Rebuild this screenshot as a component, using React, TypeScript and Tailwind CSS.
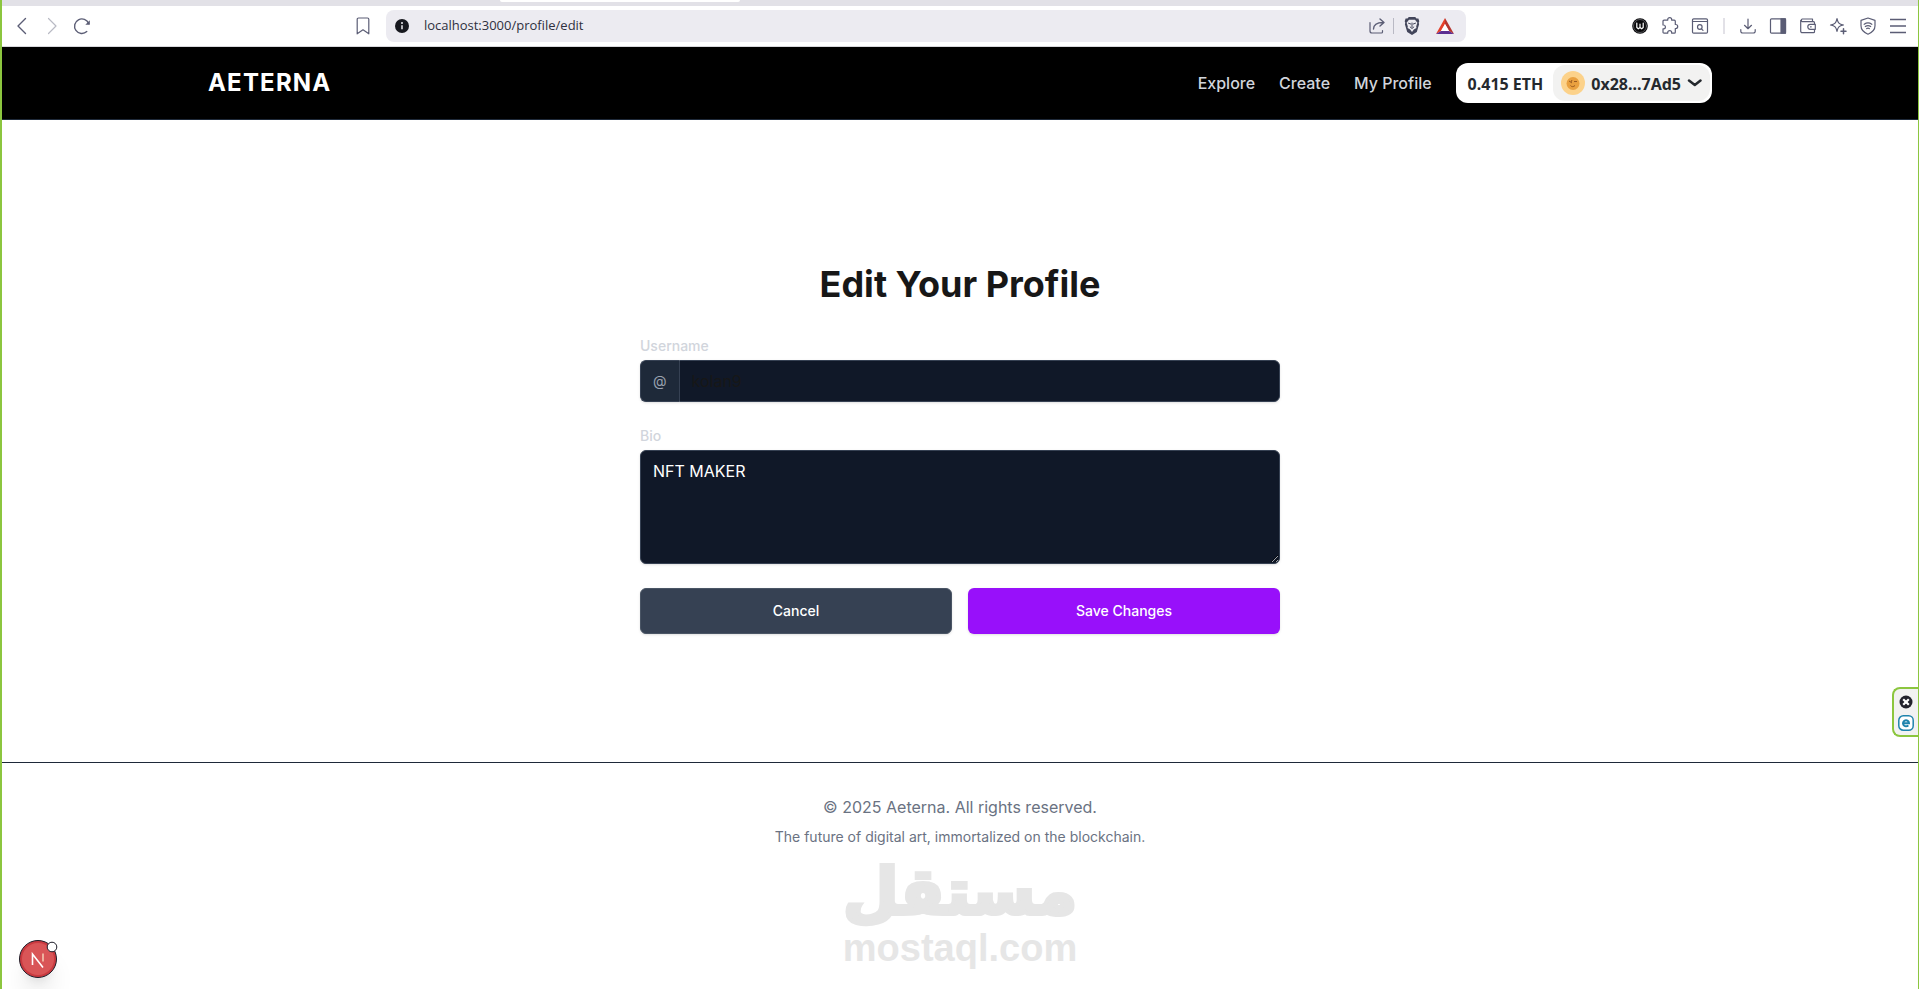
import { useState } from "react";
import type { ReactNode } from "react";

interface IconProps {
  children: ReactNode;
  className?: string;
}

function Icon({ children, className = "" }: IconProps) {
  return (
    <svg
      viewBox="0 0 16 16"
      fill="none"
      stroke="currentColor"
      strokeWidth="1.2"
      strokeLinecap="round"
      strokeLinejoin="round"
      className={`w-4 h-4 shrink-0 overflow-visible ${className}`}
      aria-hidden="true"
    >
      {children}
    </svg>
  );
}

function ToolButton({ label, children }: { label: string; children: ReactNode }) {
  return (
    <button type="button" aria-label={label} className="flex text-[#5b5d75]">
      {children}
    </button>
  );
}

function BrowserBar() {
  return (
    <div>
      {/* Tab strip */}
      <div className="h-[6px] bg-[#e2e1e7] flex">
        <div className="ml-[26%] w-60 h-[2px] bg-white rounded-b-md" />
      </div>

      {/* Toolbar */}
      <div className="h-[41px] bg-white border-b border-[#d8d8dc] flex items-center pl-3 pr-3">
        <div className="flex items-center gap-[14px]">
          <ToolButton label="Back">
            <Icon>
              <path d="M11.500 .5 4 8l7.500 7.500" strokeWidth="1.400" />
            </Icon>
          </ToolButton>
          <ToolButton label="Forward">
            <Icon className="text-[#b9bac4]">
              <path d="M4.500 .5 12 8l-7.500 7.500" />
            </Icon>
          </ToolButton>
          <ToolButton label="Reload">
            <Icon>
              <path d="M12.800 13.600A7.300 7.300 0 1 1 14.700 5.600" strokeWidth="1.400" />
              <path d="M15.800 2.300v4.500h-4.500z" fill="currentColor" stroke="none" />
            </Icon>
          </ToolButton>
        </div>

        <div className="ml-[14%] flex items-center gap-[15px]">
          <ToolButton label="Bookmark">
            <Icon>
              <path d="M2.200 1.300A1.300 1.300 0 0 1 3.500 0h9a1.300 1.300 0 0 1 1.300 1.300v14.500L8 11.800l-5.800 4z" />
            </Icon>
          </ToolButton>
          <div className="w-[1080px] h-8 rounded-lg bg-[#ecebf1] flex items-center pl-2 pr-3">
            <svg viewBox="0 0 16 16" className="w-4 h-4" aria-hidden="true">
              <circle cx="8" cy="8" r="7" fill="#17181f" />
              <circle cx="8" cy="5" r="1" fill="#ecebf1" />
              <path d="M8 7.200v4" stroke="#ecebf1" strokeWidth="1.500" fill="none" />
            </svg>
            <input
              type="text"
              aria-label="Address"
              defaultValue="localhost:3000/profile/edit"
              className="flex-1 min-w-0 ml-[14px] bg-transparent outline-none text-[13px] text-[#2f3040] font-['Open_Sans',sans-serif]"
            />
            <ToolButton label="Share">
              <Icon>
                <path d="M1 4.500V13a2 2 0 0 0 2 2h9.500a1 1 0 0 0 1-1v-1.500" />
                <path d="M4.500 11c0-4 3-6.500 9.500-6.500M11 1l4 3.500L11 8" strokeWidth="1.400" />
              </Icon>
            </ToolButton>
            <div className="w-px h-4 bg-[#b9b9c4] mx-2" />
            <ToolButton label="Brave Shields">
              <Icon className="ml-[2px]">
                <path
                  d="M4.800-.9h6.400l1.300 1.300 1.900.2.900 2.600-.6 1.500.4 1.500-2.300 7.800L8 17l-4.800-3L.9 6.200l.4-1.500L.7 3.200l.9-2.600 1.900-.2z"
                  fill="#42455a"
                  stroke="none"
                />
                <path
                  d="M5 1.800h6l2.400 3-1.200 3.500.2 1.800-2.600 1.400L8 14l-1.800-2.500-2.600-1.400.2-1.800L2.600 4.800z"
                  fill="#ecebf1"
                  stroke="none"
                />
                <path d="M4.500 5.200l2.200.8M11.500 5.200 9.300 6M8 5v4M6.200 9 8 10.500 9.800 9" stroke="#42455a" strokeWidth="1" />
              </Icon>
            </ToolButton>
            <button type="button" aria-label="Brave Rewards" className="ml-4">
              <svg viewBox="0 0 18 16" className="w-[18px] h-4" aria-hidden="true">
                <path d="M9 0 0 16l5-3 4-7z" fill="#e5402a" />
                <path d="M9 0l9 16-5-3-4-7z" fill="#b5352f" />
                <path d="M0 16h18l-5-3H5z" fill="#5b2d91" />
                <path d="M9 6l4 7H5z" fill="#fff" />
              </svg>
            </button>
          </div>
        </div>

        <div className="ml-auto flex items-center gap-[14px]">
          <ToolButton label="Wallet extension">
            <Icon>
              <circle cx="8" cy="8" r="7.800" fill="#08080a" stroke="none" />
              <circle cx="8" cy="8" r="6.500" stroke="#8a8a90" strokeWidth=".6" />
              <path d="M4.800 5v4.500l1.500 1.300L8 9.500l1.700 1.300 1.500-1.300V5M8 6v3.500" stroke="#fff" strokeWidth="1.200" />
            </Icon>
          </ToolButton>
          <ToolButton label="Extensions">
            <Icon>
              <path d="M3 2.200h2.700V1.700a2 2 0 0 1 4 0v.5h2.600a1 1 0 0 1 1 1v3.300h.4a2 2 0 0 1 0 4h-.4v3.700a1 1 0 0 1-1 1h-2.600v-.5a2 2 0 0 0-4 0v.5H2a1 1 0 0 1-1-1v-3.400h.5a1.900 1.900 0 0 0 0-3.800H1V3.200a1 1 0 0 1 1-1z" />
            </Icon>
          </ToolButton>
          <ToolButton label="Find in page">
            <Icon>
              <rect x=".5" y=".8" width="15" height="14.400" rx="1.200" />
              <path d="M.5 3.500h15" />
              <circle cx="7.800" cy="9" r="2.300" />
              <path d="m9.500 10.800 1.500 1.500" />
            </Icon>
          </ToolButton>
          <div className="w-[2px] h-4 bg-[#e2e1e7] mx-px" />
          <ToolButton label="Downloads">
            <Icon>
              <path d="M8 1v9.500M4.500 7.300 8 10.700l3.500-3.400M.8 11.500v1.700A1.800 1.800 0 0 0 2.600 15h10.800a1.800 1.800 0 0 0 1.800-1.800v-1.700" />
            </Icon>
          </ToolButton>
          <ToolButton label="Sidebar">
            <Icon>
              <rect x=".5" y=".8" width="15" height="14.400" rx="1" />
              <path d="M11 .8h4.500v14.400H11z" fill="currentColor" />
            </Icon>
          </ToolButton>
          <ToolButton label="Wallet">
            <Icon>
              <path d="M14.500 6V4.700a1 1 0 0 0-1-1H2.200A1.500 1.500 0 0 1 2.200 1h10.300v2.700M.7 2.300v10.900A1.500 1.500 0 0 0 2.200 14.700h11.300a1 1 0 0 0 1-1v-2" />
              <path d="M10.300 6.300h5v5h-5a2.500 2.500 0 0 1 0-5zM10.500 8.800h.7" />
            </Icon>
          </ToolButton>
          <ToolButton label="Leo AI">
            <Icon>
              <path d="M7 .5c.9 4.500 2 5.700 6.500 6.500C9 7.900 7.900 9 7 13.500 6.100 9 5 7.900.5 7 5 6.200 6.100 5 7 .5z" />
              <path d="M13.500 10.800v5M11 13.300h5" strokeWidth="1.500" />
            </Icon>
          </ToolButton>
          <ToolButton label="VPN">
            <Icon>
              <path d="M8 0 15 2.400v5.400c0 4.200-3.200 6.900-7 8.400-3.800-1.500-7-4.200-7-8.400V2.400z" />
              <path d="M4.200 6.300c2.400-1.700 5.200-1.700 7.600 0M5.300 8.500c1.700-1.200 3.700-1.200 5.400 0M6.700 10.600c.8-.5 1.800-.5 2.600 0" />
            </Icon>
          </ToolButton>
          <ToolButton label="Menu">
            <Icon>
              <path d="M0 1.500h16M0 8h16M0 14.500h16" strokeLinecap="butt" strokeWidth="1.400" />
            </Icon>
          </ToolButton>
        </div>
      </div>
    </div>
  );
}

function WalletButton() {
  return (
    <button
      type="button"
      className="h-10 bg-white rounded-xl flex items-center p-[2px] text-[#25292e] font-bold text-base font-['Noto_Sans',sans-serif]"
    >
      <span className="px-[10px] pt-px">0.415 ETH</span>
      <span className="h-9 rounded-xl bg-[#f2f2f1] flex items-center px-2 gap-[6px]">
        <svg viewBox="0 0 24 24" className="w-6 h-6" aria-hidden="true">
          <circle cx="12" cy="12" r="12" fill="#fcd28a" />
          <circle cx="12" cy="12.500" r="6.500" fill="#e9a03f" />
          <path d="M8 10l3 2M11 9l-1 2M16 10.500h-3M9.500 14.500c1 1.500 3 1.500 4.500 0" stroke="#9a5a20" strokeWidth="1" fill="none" />
        </svg>
        <span className="pt-px">0x28...7Ad5</span>
        <svg viewBox="0 0 15 8" fill="none" className="w-[15px] h-2" aria-hidden="true">
          <path d="M2 1.500 7.800 6l5.700-4.500" stroke="#25292e" strokeWidth="2.500" strokeLinecap="round" strokeLinejoin="round" />
        </svg>
      </span>
    </button>
  );
}

function Header() {
  return (
    <header className="bg-black border-b border-gray-800">
      <div className="max-w-[1536px] mx-auto h-[72px] px-4 flex items-center justify-between">
        <a href="#" className="text-2xl font-bold tracking-wider text-white">
          AETERNA
        </a>
        <nav className="flex items-center gap-6 font-medium text-gray-300">
          <a href="#">Explore</a>
          <a href="#">Create</a>
          <a href="#">My Profile</a>
          <WalletButton />
        </nav>
      </div>
    </header>
  );
}

function EditProfileForm() {
  const [username, setUsername] = useState("kolan9");
  const [bio, setBio] = useState("NFT MAKER");

  return (
    <main className="w-full max-w-[672px] mx-auto px-4 pt-36 pb-32">
      <h1 className="text-4xl font-bold text-center mb-8">Edit Your Profile</h1>
      <form className="space-y-6" onSubmit={(e) => e.preventDefault()}>
        <div>
          <label htmlFor="username" className="block text-sm font-medium text-gray-300">
            Username
          </label>
          <div className="mt-1 flex rounded-md shadow-sm">
            <span className="inline-flex items-center px-3 rounded-l-md border border-r-0 border-gray-700 bg-gray-800 text-gray-400 text-sm">
              @
            </span>
            <input
              id="username"
              type="text"
              value={username}
              onChange={(e) => setUsername(e.target.value)}
              className="flex-1 min-w-0 px-3 py-2 rounded-r-md border border-gray-700 bg-gray-900 text-[#171717]"
            />
          </div>
        </div>

        <div>
          <label htmlFor="bio" className="block text-sm font-medium text-gray-300">
            Bio
          </label>
          <textarea
            id="bio"
            rows={4}
            value={bio}
            onChange={(e) => setBio(e.target.value)}
            className="mt-1 block w-full px-3 py-2 rounded-md border border-gray-700 bg-gray-900 text-white shadow-sm"
          />
        </div>

        <div className="flex gap-4">
          <button
            type="button"
            className="flex-1 py-3 px-4 border border-gray-600 rounded-md shadow-sm text-sm font-medium text-white bg-gray-700"
          >
            Cancel
          </button>
          <button
            type="submit"
            className="flex-1 py-3 px-4 border border-transparent rounded-md shadow-sm text-sm font-medium text-white bg-purple-600"
          >
            Save Changes
          </button>
        </div>
      </form>
    </main>
  );
}

function Footer() {
  return (
    <footer className="border-t border-gray-800 pt-8 text-center text-gray-500">
      <p>&copy; 2025 Aeterna. All rights reserved.</p>
      <p className="text-sm mt-2">The future of digital art, immortalized on the blockchain.</p>
      <div className="flex flex-col items-center pt-2 text-[#e6e6e6] font-bold">
        <span
          lang="ar"
          dir="rtl"
          className="text-[64px] leading-[74px] font-['DejaVu_Sans',sans-serif] [-webkit-text-stroke:4px_#e6e6e6] [stroke-linejoin:round]"
        >
          مستقل
        </span>
        <span className="text-[38px] leading-[38px] font-['Liberation_Sans',sans-serif]">mostaql.com</span>
      </div>
    </footer>
  );
}

export default function App() {
  return (
    <div className="relative min-h-screen overflow-hidden bg-white text-[#171717] border-l-2 border-r border-[#8cc63f] font-['Inter',sans-serif]">
      <BrowserBar />
      <Header />
      <EditProfileForm />
      <Footer />

      {/* Side widget */}
      <div className="absolute right-0 top-[687px] w-[26px] h-[50px] bg-[#f2f2f2] border-2 border-r-0 border-[#8cc63f] rounded-l-lg flex flex-col items-center justify-center gap-[5px]">
        <button type="button" aria-label="Close">
          <svg viewBox="0 0 16 16" className="w-4 h-4 block" aria-hidden="true">
            <circle cx="8" cy="8" r="6.500" fill="#22222c" />
            <path d="M5.200 5.200l5.600 5.600M10.800 5.200l-5.600 5.600" stroke="#fff" strokeWidth="2.200" />
          </svg>
        </button>
        <button type="button" aria-label="Open widget">
          <svg viewBox="0 0 16 16" className="w-4 h-4 block" aria-hidden="true">
            <rect x=".8" y=".8" width="14.400" height="14.400" rx="4.500" fill="#fff" stroke="#1f83ad" strokeWidth="1.500" />
            <path d="M5 8.300h6A3 3 0 1 0 10.300 10.300" fill="none" stroke="#1f83ad" strokeWidth="2" />
          </svg>
        </button>
      </div>

      {/* Dev tools badge */}
      <button type="button" aria-label="Open dev tools" className="absolute left-[17px] top-[940px] rounded-full shadow-xl">
        <svg viewBox="0 0 38 38" className="w-[38px] h-[38px] block overflow-visible" aria-hidden="true">
          <circle cx="19" cy="19" r="18.500" fill="#ca3a40" stroke="#1c1c28" />
          <circle cx="19" cy="19" r="16" fill="#d95557" />
          <path d="M13.500 25V14l10.500 13.500" stroke="#fff" strokeWidth="1.600" fill="none" />
          <path d="M24 13.500v8" stroke="#f3c9b0" strokeWidth="1.600" />
          <circle cx="33" cy="7" r="4.800" fill="#fff" stroke="#1c1c28" />
        </svg>
      </button>
    </div>
  );
}
